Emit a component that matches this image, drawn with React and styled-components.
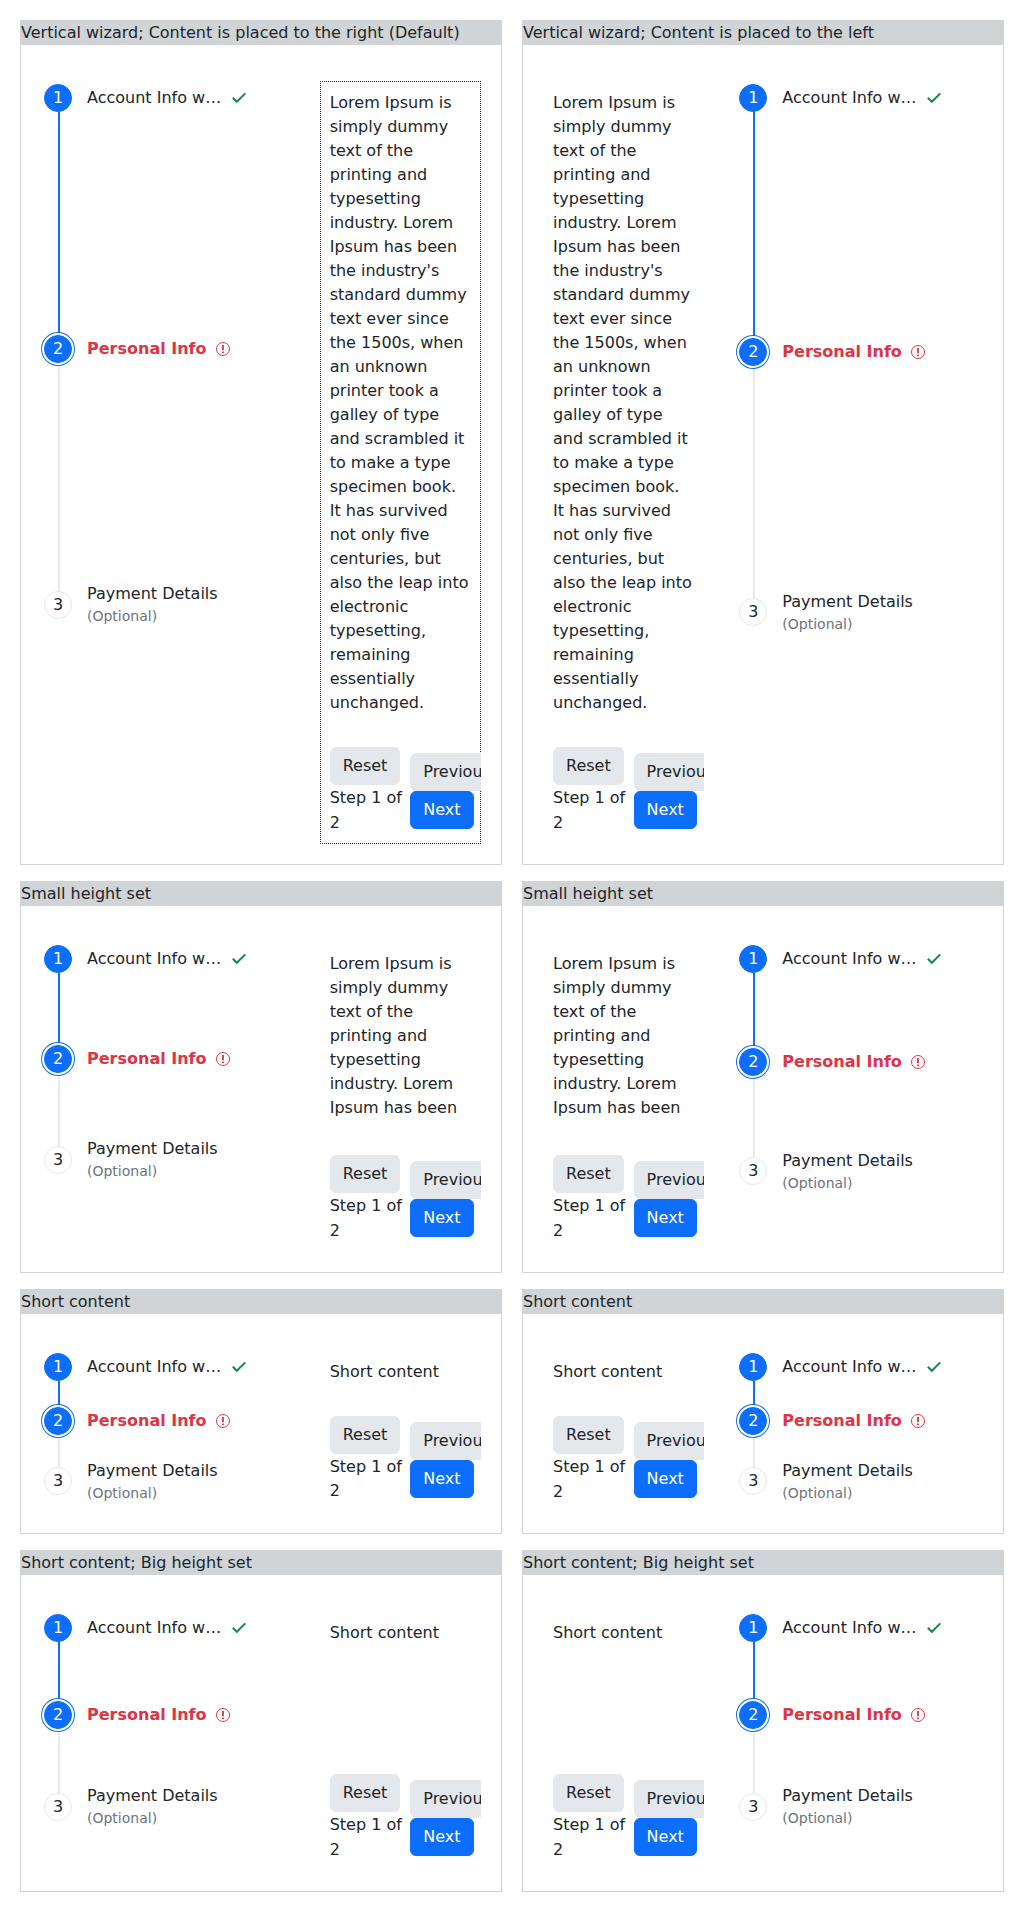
import React from "react";
import styled, { createGlobalStyle, css } from "styled-components";

const GlobalStyle = createGlobalStyle`
  *, *::before, *::after { box-sizing: border-box; }
  body {
    margin: 0;
    background: #fff;
    color: #212529;
    font: 400 16px/24px "DejaVu Sans", sans-serif;
  }
`;

const Page = styled.main`
  display: grid;
  grid-template-columns: 482px 482px;
  column-gap: 20px;
  row-gap: 16px;
  padding: 20px 20px 36px;
`;

const Card = styled.section`
  border: 1px solid #d0d4d7;
`;

const CardHeader = styled.header`
  height: 24px;
  background: #d0d4d7;
  white-space: nowrap;
`;

const Wizard = styled.div`
  display: flex;
  flex-direction: ${(p) => (p.$reverse ? "row-reverse" : "row")};
  padding: 36px 20px 20px;
`;

const Steps = styled.ol`
  flex: 1;
  min-width: 0;
  margin: 0;
  padding: 3px 0 0 ${(p) => (p.$reverse ? 35 : 3)}px;
  list-style: none;
`;

const Step = styled.li`
  display: flex;
  gap: 15px;
  height: ${(p) => p.$height}px;
`;

const Rail = styled.div`
  display: flex;
  flex-direction: column;
  width: 28px;
`;

const Marker = styled.span`
  position: relative;
  z-index: 1;
  flex: none;
  display: flex;
  align-items: center;
  justify-content: center;
  width: 28px;
  height: 28px;
  border: 1px solid ${(p) => (p.$filled ? "#0d6efd" : "#e4e7eb")};
  border-radius: 50%;
  background: ${(p) => (p.$filled ? "#0d6efd" : "#fff")};
  color: ${(p) => (p.$filled ? "#fff" : "#212529")};
  ${(p) =>
    p.$current &&
    css`
      box-shadow: 0 0 0 2px #fff, 0 0 0 3px #0d6efd;
    `}
`;

const Connector = styled.span`
  flex: 1;
  width: 2px;
  margin-left: 14px;
  background: ${(p) => (p.$done ? "#0d6efd" : "#e6e9ed")};
`;

const StepText = styled.div`
  margin-top: ${(p) => p.$top}px;
`;

const StepLabel = styled.div`
  display: flex;
  align-items: center;
  gap: ${(p) => (p.$invalid ? 9 : 11)}px;
  white-space: nowrap;
  ${(p) =>
    p.$invalid &&
    css`
      color: #dc3545;
      font-weight: 700;
    `}
`;

const Optional = styled.div`
  color: #6c757d;
  font-size: 14px;
  line-height: 21px;
`;

const Icon = styled.svg`
  flex: none;
  width: 14px;
  height: 14px;
  fill: none;
`;

const Panel = styled.div`
  flex: none;
  width: 161.33px;
  padding: 10px;
  overflow: hidden;
  ${(p) =>
    p.$focused &&
    css`
      outline: 1px dotted #212529;
      outline-offset: -1px;
    `}
`;

const Content = styled.div`
  height: ${(p) => p.$height}px;
  margin-bottom: 32px;
  overflow: hidden;
`;

const Footer = styled.footer`
  display: flex;
  align-items: center;
  height: 87px;
`;

const Status = styled.div`
  flex: none;
  width: 80.6px;
  height: 87px;
`;

const StepCount = styled.div`
  padding-top: ${(p) => 25 - p.$leading}px;
  line-height: ${(p) => p.$leading}px;
`;

const Actions = styled.div`
  flex: none;
  display: flex;
  flex-direction: column;
  align-items: flex-start;
`;

const Button = styled.button`
  position: relative;
  z-index: 1;
  display: block;
  height: 38px;
  padding: 6px 12px;
  border: 1px solid ${(p) => (p.$primary ? "#0d6efd" : "#e4e7eb")};
  border-radius: 6px;
  background: ${(p) => (p.$primary ? "#0d6efd" : "#e4e7eb")};
  color: ${(p) => (p.$primary ? "#fff" : "#212529")};
  font: inherit;
  white-space: nowrap;
`;

const LOREM =
  "Lorem Ipsum is simply dummy text of the printing and typesetting industry. Lorem Ipsum has been the industry's standard dummy text ever since the 1500s, when an unknown printer took a galley of type and scrambled it to make a type specimen book. It has survived not only five centuries, but also the leap into electronic typesetting, remaining essentially unchanged.";
const EXCERPT =
  "Lorem Ipsum is simply dummy text of the printing and typesetting industry. Lorem Ipsum has been";

const WIZARDS = [
  { title: "Vertical wizard; Content is placed to the right (Default)", text: LOREM, height: 624, spans: [251, 256], optionalTop: -9, focused: true },
  { title: "Vertical wizard; Content is placed to the left", text: LOREM, height: 624, spans: [254, 260], optionalTop: -8, reverse: true },
  { title: "Small height set", text: EXCERPT, height: 171, spans: [100, 101], optionalTop: -9 },
  { title: "Small height set", text: EXCERPT, height: 171, spans: [103, 109], optionalTop: -8, reverse: true },
  { title: "Short content", text: "Short content", height: 24, spans: [54, 60], optionalTop: -8, leading: 24 },
  { title: "Short content", text: "Short content", height: 24, spans: [54, 60], optionalTop: -8, reverse: true },
  { title: "Short content; Big height set", text: "Short content", height: 121, spans: [87, 92], optionalTop: -9 },
  { title: "Short content; Big height set", text: "Short content", height: 121, spans: [87, 92], optionalTop: -9, reverse: true },
];

function CheckIcon() {
  return (
    <Icon viewBox="0 0 14 14" aria-hidden="true">
      <path d="M.8 6.8 4.8 10.8 13.3 2.4" stroke="#198754" strokeWidth="2" />
    </Icon>
  );
}

function ErrorIcon() {
  return (
    <Icon viewBox="0 0 14 14" aria-hidden="true">
      <circle cx="7" cy="7" r="6.5" stroke="#dc3545" />
      <path d="M7 3v5.2M7 9.4v1.8" stroke="#dc3545" strokeWidth="1.8" />
    </Icon>
  );
}

function WizardCard({ title, text, height, spans, optionalTop, reverse, focused, leading = 25 }) {
  return (
    <Card>
      <CardHeader>{title}</CardHeader>
      <Wizard $reverse={reverse}>
        <Steps $reverse={reverse}>
          <Step $height={spans[0]}>
            <Rail>
              <Marker $filled>1</Marker>
              <Connector $done />
            </Rail>
            <StepText $top={2}>
              <StepLabel>Account Info w… <CheckIcon /></StepLabel>
            </StepText>
          </Step>
          <Step $height={spans[1]}>
            <Rail>
              <Marker $filled $current>2</Marker>
              <Connector />
            </Rail>
            <StepText $top={2}>
              <StepLabel $invalid>Personal Info <ErrorIcon /></StepLabel>
            </StepText>
          </Step>
          <Step $height={28}>
            <Rail>
              <Marker>3</Marker>
            </Rail>
            <StepText $top={optionalTop}>
              <StepLabel>Payment Details</StepLabel>
              <Optional>(Optional)</Optional>
            </StepText>
          </Step>
        </Steps>
        <Panel $focused={focused}>
          <Content $height={height}>{text}</Content>
          <Footer>
            <Status>
              <Button>Reset</Button>
              <StepCount $leading={leading}>Step 1 of 2</StepCount>
            </Status>
            <Actions>
              <Button>Previous</Button>
              <Button $primary>Next</Button>
            </Actions>
          </Footer>
        </Panel>
      </Wizard>
    </Card>
  );
}

export default function App() {
  return (
    <>
      <GlobalStyle />
      <Page>
        {WIZARDS.map((wizard, index) => (
          <WizardCard key={index} {...wizard} />
        ))}
      </Page>
    </>
  );
}
